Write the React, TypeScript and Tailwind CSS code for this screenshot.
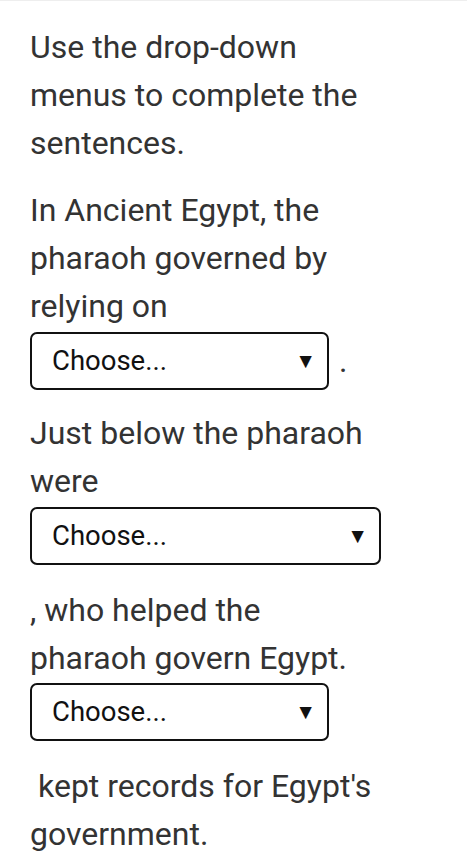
function Choose({ width }: { width: string }) {
  return (
    <div
      className={`${width} h-[58px] flex items-center justify-between rounded-[7px] border-2 border-[#111] bg-white pl-[20px] pr-[11px] text-[27.5px] text-[#111]`}
    >
      <span>Choose...</span>
      <span className="text-[21px] leading-none">▼</span>
    </div>
  );
}

export default function App() {
  return (
    <div
      className="min-h-[860px] w-[467px] bg-white border-t border-[#eeeeee] text-[#333333]"
      style={{ fontFamily: "Roboto, 'Noto Sans', sans-serif" }}
    >
      <div className="w-[372px] pl-[30px] pt-[22px] text-[32px] leading-[48px]">
        <p>Use the drop-down menus to complete the sentences.</p>

        <p className="mt-[19px]">In Ancient Egypt, the pharaoh governed by relying on</p>
        <div className="mt-[2px] flex items-center gap-[10px]">
          <Choose width="w-[299px]" />
          <span>.</span>
        </div>

        <p className="mt-[19px]">Just below the pharaoh were</p>
        <div className="mt-[2px]">
          <Choose width="w-[351px]" />
        </div>

        <p className="mt-[21px]">, who helped the pharaoh govern Egypt.</p>
        <div className="mt-[1px]">
          <Choose width="w-[299px]" />
        </div>

        <p className="mt-[21px] indent-[8px]">kept records for Egypt's government.</p>
      </div>
    </div>
  );
}
